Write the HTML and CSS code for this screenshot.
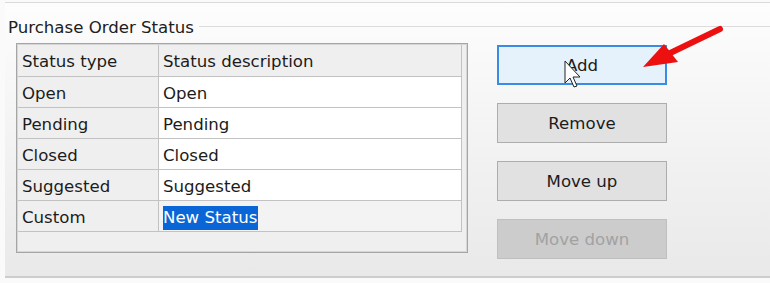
FILE: index.html
```html
<!DOCTYPE html>
<html lang="en">
  <head>
    <meta charset="UTF-8" />
    <title>Purchase Order Status</title>
    <link rel="stylesheet" href="styles.css">
  </head>
  <body>
    <div class="window">
      <div class="group">
        <div class="group-head">
          <span class="group-title">Purchase Order Status</span>
          <span class="group-rule"></span>
        </div>
        <div class="group-body">
          <div class="grid-box">
            <table class="grid">
              <tr class="grid-head">
                <td class="col-type">Status type</td>
                <td class="col-desc">Status description</td>
              </tr>
              <tr><td class="col-type">Open</td><td class="col-desc">Open</td></tr>
              <tr><td class="col-type">Pending</td><td class="col-desc">Pending</td></tr>
              <tr><td class="col-type">Closed</td><td class="col-desc">Closed</td></tr>
              <tr><td class="col-type">Suggested</td><td class="col-desc">Suggested</td></tr>
              <tr class="row-current">
                <td class="col-type">Custom</td>
                <td class="col-desc"><span class="selected-text">New Status</span></td>
              </tr>
            </table>
          </div>
          <div class="buttons">
            <button class="btn btn-hot">Add</button>
            <button class="btn">Remove</button>
            <button class="btn">Move up</button>
            <button class="btn" disabled>Move down</button>
          </div>
        </div>
      </div>

      <!-- annotation arrow drawn over the screenshot -->
      <svg class="overlay" width="770" height="283" viewBox="0 0 770 283">
        <line x1="720" y1="29" x2="664" y2="56" stroke="#ec1010" stroke-width="6" stroke-linecap="round" />
        <polygon points="643,67 664,44 678,62" fill="#ec1010" />
        <!-- mouse pointer -->
        <path d="M565 61 L565 83 L570 78 L574 87 L577 86 L573 77 L580 77 Z" fill="#ffffff" stroke="#222222" stroke-width="1" stroke-linejoin="round" />
      </svg>
    </div>
  </body>
</html>
```

FILE: styles.css
```css
body {
  margin: 0;
  background: #fafafa;
  font-family: "DejaVu Sans", Verdana, sans-serif;
  font-size: 16.6px;
  color: #1c1c1c;
}
.window {
  position: relative;
  width: 770px;
  height: 283px;
  overflow: hidden;
  padding-left: 5px;
  box-sizing: border-box;
}
.group {
  margin-top: 2px;
  border-top: 1px solid #dadada;
  height: 273px;
  border-bottom: 2px solid #cdcdcd;
  background: linear-gradient(#fdfdfd, #e9e9e9);
}
.group-head {
  display: flex;
  padding: 15px 0 0 3px;
  line-height: 20px;
}
.group-title {
  color: #202020;
}
.group-rule {
  flex: 1;
  margin: 8px 0 0 5px;
  height: 1px;
  background: #dcdcdc;
}
.group-body {
  display: flex;
  margin-top: 5px;
  padding-left: 11px;
}
.grid-box {
  width: 452px;
  height: 210px;
  box-sizing: border-box;
  border: 1px solid #a5a5a5;
  box-shadow: inset 0 0 0 1px #d6d6d6;
  background: #efefef;
  padding: 1px;
}
.grid {
  border-collapse: collapse;
  font-size: 16.6px;
}
.grid td {
  height: 28px;
  padding: 2px 0 0 4px;
  border: 1px solid #c2c2c2;
  border-top: none;
  white-space: nowrap;
}
.grid .col-type {
  width: 136px;
  background: #efefef;
  border-left: none;
}
.grid .col-desc {
  width: 298px;
  background: #ffffff;
}
.grid-head td {
  height: 29px;
  background: #efefef;
}
.grid-head .col-desc {
  background: #efefef;
}
.row-current .col-desc {
  background: #f3f3f3;
}
.selected-text {
  background: #0a66d6;
  color: #ffffff;
  padding: 2px 1px 3px 0;
}
.buttons {
  display: flex;
  flex-direction: column;
  gap: 18px;
  margin: 2px 0 0 29px;
}
.btn {
  width: 170px;
  height: 40px;
  font-family: "DejaVu Sans", Verdana, sans-serif;
  font-size: 16.6px;
  color: #1c1c1c;
  background: #e1e1e1;
  border: 1px solid #adadad;
  padding: 0;
}
.btn-hot {
  background: #e5f1fb;
  border: 2px solid #3a8be4;
}
.btn:disabled {
  background: #cccccc;
  border-color: #bfbfbf;
  color: #a2a2a2;
}
.overlay {
  position: absolute;
  left: 0;
  top: 0;
  pointer-events: none;
}
```
